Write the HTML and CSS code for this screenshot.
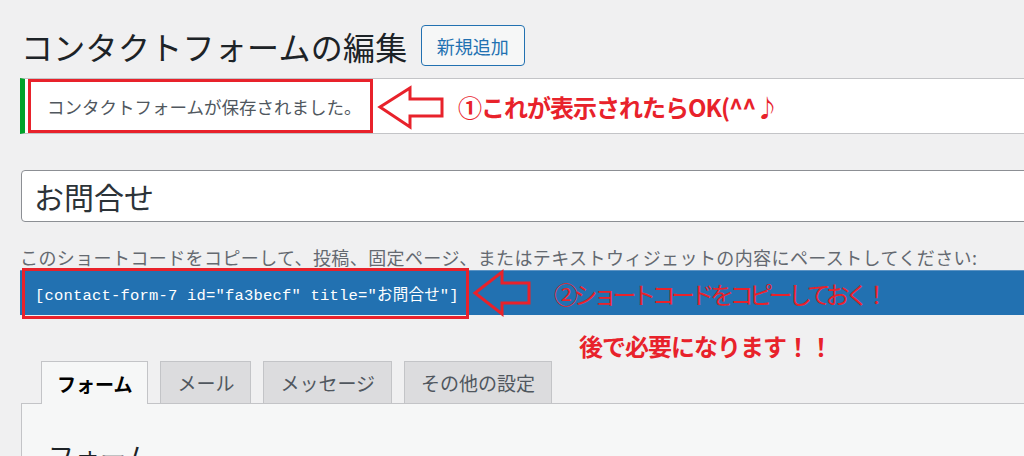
FILE: index.html
```html
<!DOCTYPE html>
<html lang="ja">
  <head>
    <meta charset="UTF-8" />
    <meta name="viewport" content="width=device-width, initial-scale=1.0" />
    <title>コンタクトフォームの編集</title>
    <link rel="stylesheet" href="styles.css">
  </head>

  <body>
    <div id="wrap">
      <div id="page-head">
        <h1 id="page-title">コンタクトフォームの編集</h1>
        <a class="btn-add" href="#">新規追加</a>
      </div>

      <div id="notice">
        <p class="mark mark-notice">コンタクトフォームが保存されました。</p>
        <svg class="arrow arrow-1" width="70" height="50" viewBox="0 0 70 50">
          <polygon points="4,26 34,7 34,18 66,18 66,35 34,35 34,46" />
        </svg>
        <span class="note note-1">①これが表示されたらOK(^^♪</span>
      </div>

      <input type="text" id="title-input" value="お問合せ" />

      <p id="desc">このショートコードをコピーして、投稿、固定ページ、またはテキストウィジェットの内容にペーストしてください:</p>

      <div id="shortcode">
        <span class="mark mark-code">[contact-form-7 id="fa3becf" title="お問合せ"]</span>
        <svg class="arrow arrow-2" width="60" height="50" viewBox="0 0 60 50">
          <polygon points="3,25 30,4 30,15 57,15 57,35 30,35 30,46" />
        </svg>
        <span class="note note-2">②ショートコードをコピーしておく！</span>
      </div>

      <p class="note note-later">後で必要になります！！</p>

      <div id="tabs">
        <span class="tab tab-active">フォーム</span>
        <span class="tab">メール</span>
        <span class="tab">メッセージ</span>
        <span class="tab">その他の設定</span>
      </div>

      <div id="panel">
        <h2 id="panel-title">フォーム</h2>
      </div>
    </div>
  </body>
</html>
```

FILE: styles.css
```css
body {
  margin: 0;
  background-color: #f0f0f1;
  font-family: "Noto Sans CJK JP", "Noto Sans", sans-serif;
  color: #1d2327;
  overflow: hidden;
}

#wrap {
  padding: 25px 0 0 20px;
  margin-right: -20px;
}

#page-head {
  display: flex;
  align-items: center;
  height: 41px;
}

#page-title {
  margin: 0 0 0 1px;
  font-size: 32px;
  font-weight: 400;
  line-height: 1;
  letter-spacing: 0.3px;
  color: #1d2327;
}

.btn-add {
  margin-left: 13px;
  width: 104px;
  height: 41px;
  box-sizing: border-box;
  display: flex;
  align-items: center;
  justify-content: center;
  border: 1px solid #2271b1;
  border-radius: 4px;
  background-color: #f6f7f7;
  color: #2271b1;
  font-size: 18px;
  text-decoration: none;
}

#notice {
  margin-top: 12px;
  height: 56px;
  box-sizing: border-box;
  display: flex;
  align-items: center;
  background-color: #fff;
  border: 1px solid #c3c4c7;
  border-left: 5px solid #00a32a;
  padding-left: 3px;
}

.mark {
  border: 3px solid #e8222b;
  box-sizing: border-box;
  display: flex;
  align-items: center;
}

.mark-notice {
  margin: 0;
  width: 345px;
  height: 54px;
  padding-left: 16px;
  font-size: 17.5px;
  color: #50575e;
}

.arrow {
  flex: none;
  margin-left: 3px;
}

.arrow polygon {
  fill: none;
  stroke: #e8222b;
  stroke-width: 3;
}

.note {
  color: #e8222b;
  font-weight: 700;
  font-size: 24px;
  letter-spacing: -1px;
  white-space: nowrap;
}

.note-1 {
  margin-left: 12px;
}

#title-input {
  display: block;
  margin: 36px 0 0 1px;
  width: 100%;
  height: 52px;
  box-sizing: border-box;
  border: 1px solid #8c8f94;
  border-radius: 4px;
  background-color: #fff;
  padding: 0 12px;
  font-family: "Noto Sans CJK JP", "Noto Sans", sans-serif;
  font-size: 30px;
  color: #2c3338;
}

#desc {
  margin: 23px 0 0;
  line-height: 24px;
  font-size: 18px;
  letter-spacing: 0.4px;
  color: #646970;
  white-space: nowrap;
}

#shortcode {
  margin-top: 1px;
  height: 45px;
  display: flex;
  align-items: center;
  background-color: #2271b1;
  border-top: 1px solid #5b93c4;
  box-sizing: border-box;
}

.mark-code {
  margin-left: 2px;
  width: 447px;
  height: 51px;
  padding-left: 10px;
  font-family: "Liberation Mono", "Noto Sans CJK JP", monospace;
  font-size: 15.5px;
  letter-spacing: 0.2px;
  color: #fff;
  white-space: nowrap;
}

.note-2 {
  margin-left: 22px;
  font-weight: 400;
  letter-spacing: -4.5px;
}

.note-later {
  margin: 16px 0 0 559px;
  line-height: 30px;
  letter-spacing: -1px;
}

#tabs {
  display: flex;
  gap: 12px;
  padding-left: 21px;
  height: 42px;
  position: relative;
  z-index: 1;
}

.tab {
  display: flex;
  align-items: center;
  padding: 0 16px;
  border: 1px solid #c3c4c7;
  border-bottom: 0;
  background-color: #dcdcde;
  font-size: 19px;
  color: #50575e;
}

.tab-active {
  padding: 0 15px;
  height: 43px;
  box-sizing: border-box;
  background-color: #f6f7f7;
  color: #000;
  font-weight: 700;
}

#panel {
  margin-left: 1px;
  height: 120px;
  background-color: #f6f7f7;
  border: 1px solid #c3c4c7;
  padding-left: 26px;
}

#panel-title {
  margin: 36px 0 0;
  font-size: 26px;
  font-weight: 400;
  line-height: 1.2;
  color: #1d2327;
}
```
